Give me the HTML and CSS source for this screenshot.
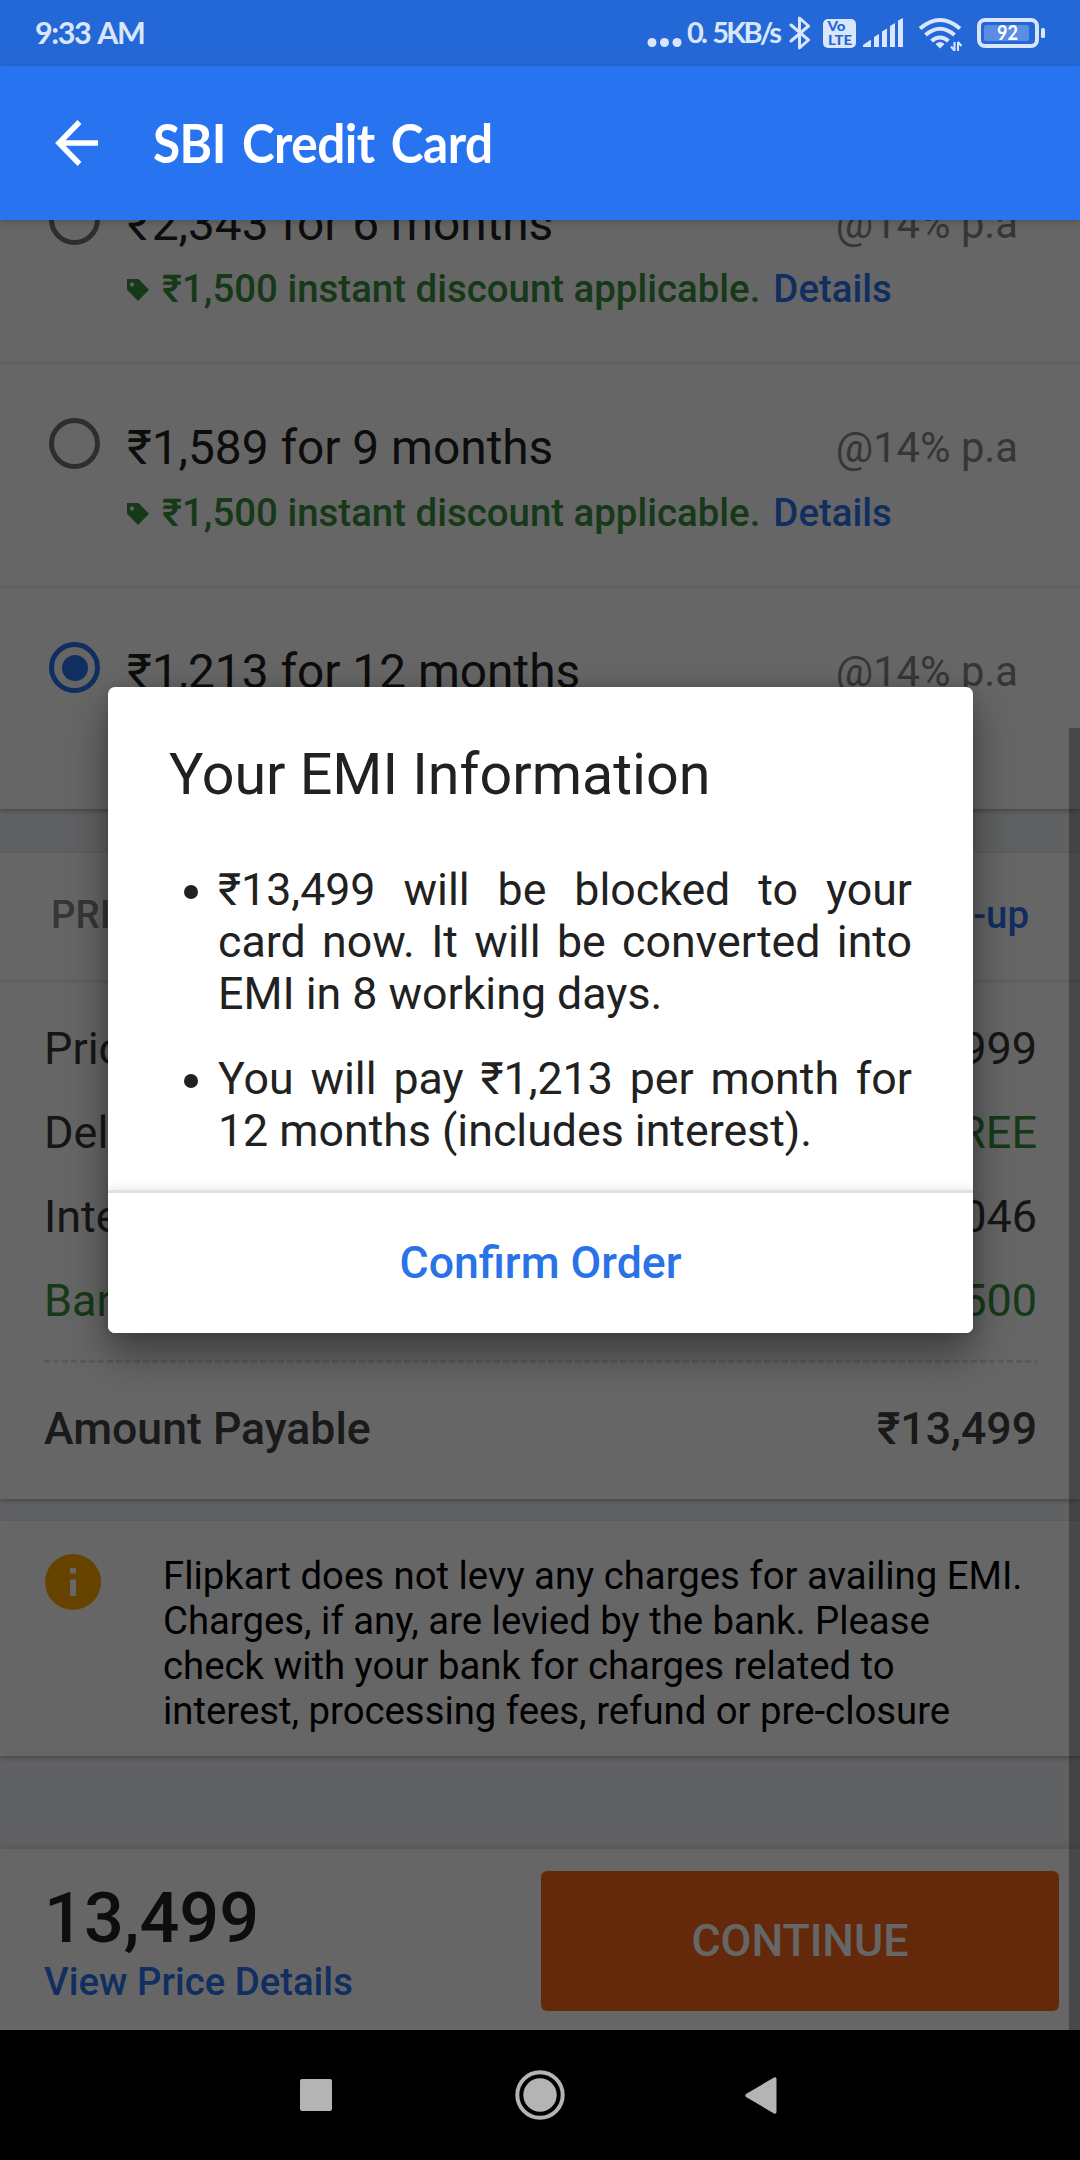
FILE: index.html
```
<!DOCTYPE html>
<html lang="en">
<head>
<meta charset="utf-8">
<title>SBI Credit Card</title>
<link rel="stylesheet" href="styles.css">
</head>
<body>
<div class="screen">
  <header class="status-bar">
    <span class="status-time">9:33 AM</span>
    <div class="status-icons">
      <svg class="dots" width="32" height="66" viewBox="0 0 32 66" fill="currentColor"><circle cx="4" cy="42.500" r="4.500"/><circle cx="16.500" cy="42.500" r="4.500"/><circle cx="29" cy="42.500" r="4.500"/></svg>
      <span class="status-speed">0. 5KB/s</span>
      <svg class="bluetooth" width="22" height="66" viewBox="0 0 22 66" fill="none" stroke="currentColor" stroke-width="3" stroke-linejoin="round" stroke-linecap="round"><path d="M2 25 19.500 40 10.500 48V18L19.500 26 2 41"/></svg>
      <svg class="volte" width="33" height="66" viewBox="0 0 33 66"><rect y="19" width="33" height="29" rx="5" fill="currentColor"/><text x="4.500" y="31" class="volte-text" textLength="18" lengthAdjust="spacingAndGlyphs">Vo</text><text x="5" y="44.500" class="volte-text" textLength="24" lengthAdjust="spacingAndGlyphs">LTE</text></svg>
      <svg class="signal" width="40" height="66" viewBox="0 0 40 66" fill="currentColor"><path d="M0 47v-2l8-5.500V47zM11 47V37l5-3v13zM19 47V31.500l5-3V47zM27 47V26l5-3v24zM35 47V20.500l5-2.500v29z"/></svg>
      <svg class="wifi" width="44" height="66" viewBox="0 0 44 66"><g fill="none" stroke="currentColor" stroke-width="4"><path d="M1 28.500Q21 11.500 41 28.500M6.500 35Q21 22.500 35.500 35M12.500 41Q21 34 29.500 41"/></g><path d="M16.500 44Q21 40 25.500 44L21 48.500z" fill="currentColor"/><path d="M35.500 42v9M39 51v-9M32 46.500l3.500 4M42.500 46 39 42" stroke="currentColor" stroke-width="2"/></svg>
      <svg class="battery" width="68" height="66" viewBox="0 0 68 66"><rect x="2" y="20" width="58" height="26" rx="6" fill="none" stroke="currentColor" stroke-width="4"/><rect x="7" y="25" width="45" height="16" rx="2" fill="#5a8de3"/><rect x="64" y="28" width="4" height="10" rx="1.500" fill="currentColor"/><text x="20" y="40" class="battery-text" textLength="21" lengthAdjust="spacingAndGlyphs">92</text></svg>
    </div>
  </header>

  <div class="app-bar">
    <svg class="back" width="44" height="46" viewBox="0 0 44 46" fill="none" stroke="#fff" stroke-width="5.500"><path d="M43 23H4M24.500 2 4 23l20.500 21"/></svg>
    <h1 class="app-title">SBI Credit Card</h1>
  </div>

  <main class="viewport">
    <section class="card options">
      <div class="option">
        <span class="radio"></span>
        <div class="option-body">
          <div class="option-title">₹2,343 for 6 months</div>
          <div class="offer"><svg class="tag" width="22" height="22" viewBox="0 0 22 22" fill="currentColor"><path fill-rule="evenodd" d="M0 0H11.500L22 10.800 11 22 0 10.800zM5 3.500a2 2 0 1 0 .01 0z"/></svg><span>₹1,500 instant discount applicable.</span><a class="link">Details</a></div>
        </div>
        <span class="rate">@14% p.a</span>
      </div>
      <div class="option">
        <span class="radio"></span>
        <div class="option-body">
          <div class="option-title">₹1,589 for 9 months</div>
          <div class="offer"><svg class="tag" width="22" height="22" viewBox="0 0 22 22" fill="currentColor"><path fill-rule="evenodd" d="M0 0H11.500L22 10.800 11 22 0 10.800zM5 3.500a2 2 0 1 0 .01 0z"/></svg><span>₹1,500 instant discount applicable.</span><a class="link">Details</a></div>
        </div>
        <span class="rate">@14% p.a</span>
      </div>
      <div class="option">
        <span class="radio checked"></span>
        <div class="option-body">
          <div class="option-title">₹1,213 for 12 months</div>
        </div>
        <span class="rate">@14% p.a</span>
      </div>
    </section>

    <section class="card prices">
      <div class="price-head"><span>PRI</span><a class="link">-up</a></div>
      <div class="price-list">
        <div class="price-row"><span>Pric</span><span>999</span></div>
        <div class="price-row"><span>Deli</span><span class="green">FREE</span></div>
        <div class="price-row"><span>Inter</span><span>046</span></div>
        <div class="price-row green"><span>Ban</span><span>500</span></div>
      </div>
      <div class="dashes"></div>
      <div class="payable"><span>Amount Payable</span><span>₹13,499</span></div>
    </section>

    <section class="card note">
      <svg class="info" width="56" height="56" viewBox="0 0 56 56"><circle cx="28" cy="28" r="28" fill="#ffab00"/><path d="M25 14h6v5.500h-6zM25 25.500h6V42h-6z" fill="#fff"/></svg>
      <p class="note-text">Flipkart does not levy any charges for availing EMI.<br>Charges, if any, are levied by the bank. Please<br>check with your bank for charges related to<br>interest, processing fees, refund or pre-closure</p>
    </section>

    <footer class="checkout">
      <div class="total">
        <div class="total-amount">13,499</div>
        <a class="link total-link">View Price Details</a>
      </div>
      <button class="continue">CONTINUE</button>
    </footer>

    <div class="overlay">
      <div class="dialog">
        <h2 class="dialog-title">Your EMI Information</h2>
        <ul class="dialog-list">
          <li>₹13,499 will be blocked to your card&nbsp;now. It will be converted into EMI in 8 working days.</li>
          <li>You will pay ₹1,213 per month for 12&nbsp;months (includes interest).</li>
        </ul>
        <button class="confirm">Confirm Order</button>
      </div>
    </div>
    <div class="scrollbar"></div>
  </main>

  <nav class="nav-bar">
    <svg width="32" height="32" viewBox="0 0 32 32" fill="#b4b4b4"><rect width="32" height="32" rx="2"/></svg>
    <svg width="50" height="50" viewBox="0 0 50 50"><circle cx="25" cy="25" r="22.700" fill="none" stroke="#b4b4b4" stroke-width="4"/><circle cx="25" cy="25" r="16.700" fill="#b4b4b4"/></svg>
    <svg width="32" height="37" viewBox="0 0 32 37" fill="#b4b4b4"><path d="M1 17 29 .500Q31.500-.300 31.500 2V35Q31.500 37.300 29 36.500L1 20Q-.500 18.500 1 17z"/></svg>
  </nav>
</div>
</body>
</html>
```
FILE: styles.css
```
* { box-sizing: border-box; }

body {
  margin: 0;
  font-family: Roboto, "Liberation Sans", sans-serif;
  color: #212121;
  background: #000;
}

h1, h2, p, ul { margin: 0; padding: 0; font-weight: 400; }
button { border: 0; margin: 0; padding: 0; font: inherit; }
svg { display: block; flex: none; }

.screen {
  width: 1080px;
  height: 2160px;
  display: flex;
  flex-direction: column;
  overflow: hidden;
}

/* status bar */
.status-bar {
  height: 66px;
  flex: none;
  display: flex;
  justify-content: space-between;
  padding: 0 35px;
  background: #2468d8;
  color: #d9e6fb;
  font-family: Lato, sans-serif;
}
.status-time {
  font-size: 30.5px;
  font-weight: 700;
  line-height: 65px;
  letter-spacing: -1.4px;
  word-spacing: 2px;
  white-space: nowrap;
}
.status-icons { display: flex; }
.dots { overflow: visible; }
.status-speed {
  width: 94px;
  margin-left: 7px;
  font-size: 29px;
  font-weight: 700;
  line-height: 64px;
  letter-spacing: -2.8px;
  word-spacing: 3px;
  white-space: nowrap;
}
.bluetooth { margin-left: 8px; }
.volte { margin-left: 12px; }
.volte-text { font: 900 13.5px Lato, sans-serif; fill: #2468d8; }
.signal { margin-left: 7px; }
.wifi { margin-left: 16px; }
.battery { margin-left: 14px; }
.battery-text { font: 700 21px Lato, sans-serif; fill: #fff; }

/* app bar */
.app-bar {
  position: relative;
  z-index: 1;
  height: 154px;
  flex: none;
  display: flex;
  align-items: center;
  padding-left: 55px;
  background: #2874f0;
  box-shadow: 0 2px 8px rgba(0, 0, 0, .2);
}
.app-title {
  margin-left: 54px;
  font: 700 53px/60px Lato, sans-serif;
  color: #fff;
  letter-spacing: -.6px;
  word-spacing: 5px;
  white-space: nowrap;
  transform: scaleX(.935);
  transform-origin: left;
}

/* page */
.viewport {
  position: relative;
  height: 1810px;
  flex: none;
  overflow: hidden;
  background: #f1f3f6;
}
.card {
  background: #fff;
  box-shadow: 0 2px 5px rgba(0, 0, 0, .28);
}
.link { color: #2874f0; font-weight: 500; }
.green { color: #388e3c; }

.options { margin-top: -80px; height: 669px; }
.option {
  display: flex;
  height: 224px;
  padding: 54px 62px 0 49px;
  border-bottom: 3px solid #f0f0f0;
}
.option:last-child { height: 221px; border: 0; }
.radio {
  flex: none;
  width: 51px;
  height: 51px;
  border: 5.5px solid #737373;
  border-radius: 50%;
}
.radio.checked {
  display: grid;
  place-items: center;
  border-color: #2874f0;
}
.radio.checked::before {
  content: "";
  width: 26px;
  height: 26px;
  border-radius: 50%;
  background: #2874f0;
}
.option-body { flex: 1; min-width: 0; margin: 2px 0 0 27px; }
.option-title { font-size: 47.8px; line-height: 56px; white-space: nowrap; }
.offer {
  display: flex;
  align-items: center;
  margin-top: 14px;
  font-size: 38.4px;
  line-height: 46px;
  font-weight: 500;
  color: #388e3c;
  white-space: nowrap;
}
.tag { margin: 2px 13px 0 0; }
.offer .link { margin-left: 13px; }
.rate {
  margin-top: 2px;
  font-size: 41.7px;
  line-height: 56px;
  color: #878787;
  white-space: nowrap;
}

.prices { margin-top: 44px; height: 646px; }
.price-head {
  display: flex;
  justify-content: space-between;
  height: 130px;
  padding: 0 51px;
  border-bottom: 3px solid #ededed;
  font-size: 38.4px;
  font-weight: 500;
  line-height: 124px;
  color: #878787;
}
.price-list { padding: 24px 43px 0 44px; }
.price-row {
  display: flex;
  justify-content: space-between;
  font-size: 45px;
  line-height: 84px;
  color: #373737;
}
.price-row.green, .price-row .green { color: #388e3c; }
.dashes {
  height: 3px;
  margin: 17px 43px 0 44px;
  background: repeating-linear-gradient(90deg, #e0e0e0 0 6px, transparent 6px 9px);
}
.payable {
  display: flex;
  justify-content: space-between;
  padding: 0 43px 0 44px;
  font-size: 44.6px;
  font-weight: 500;
  line-height: 132px;
  color: #424242;
}

.note {
  display: flex;
  gap: 62px;
  margin-top: 22px;
  height: 235px;
  padding: 33px 45px 0;
}
.note-text {
  margin-top: -1px;
  font-size: 38.3px;
  line-height: 45px;
  color: #000;
  white-space: nowrap;
}

.checkout {
  display: flex;
  justify-content: space-between;
  margin-top: 93px;
  height: 181px;
  padding: 22px 21px 0 44px;
  background: #fff;
  box-shadow: 0 -1px 10px rgba(0, 0, 0, .16);
}
.total { padding-top: 7px; }
.total-amount { font-size: 70.2px; line-height: 80px; font-weight: 500; }
.total-link { display: block; margin-top: 1px; font-size: 38.3px; line-height: 46px; }
.continue {
  width: 518px;
  height: 140px;
  padding-bottom: 1px;
  border-radius: 6px;
  background: #f7661b;
  color: #fff;
  font-size: 44.7px;
  font-weight: 500;
}

/* dialog */
.overlay {
  position: absolute;
  inset: 0;
  padding: 467px 107px 0 108px;
  background: rgba(0, 0, 0, .6);
}
.dialog {
  height: 646px;
  display: flex;
  flex-direction: column;
  padding-top: 54px;
  border-radius: 7px;
  background: #fff;
  box-shadow: 0 20px 42px rgba(0, 0, 0, .42), 0 0 12px rgba(0, 0, 0, .12);
}
.dialog-title { padding-left: 61px; font-size: 57.4px; line-height: 68px; }
.dialog-list {
  flex: 1;
  padding: 55px 61px 0 110px;
  list-style: none;
  font-size: 44.7px;
  line-height: 52px;
  text-align: justify;
}
.dialog-list li { position: relative; margin-bottom: 33px; }
.dialog-list li::before {
  content: "";
  position: absolute;
  left: -34px;
  top: 21px;
  width: 14px;
  height: 14px;
  border-radius: 50%;
  background: #212121;
}
.confirm {
  height: 143px;
  border-top: 3px solid #e0e0e0;
  border-radius: 0 0 7px 7px;
  background: #fff;
  box-shadow: 0 -3px 8px rgba(0, 0, 0, .07);
  color: #2a72e8;
  font-size: 44.6px;
  font-weight: 500;
}

.scrollbar {
  position: absolute;
  top: 508px;
  right: 0;
  bottom: 0;
  width: 11px;
  background: rgba(0, 0, 0, .29);
}

/* system navigation */
.nav-bar {
  flex: 1;
  display: flex;
  align-items: center;
  padding-left: 300px;
  background: #000;
}
.nav-bar svg:nth-child(2) { margin-left: 183px; }
.nav-bar svg:nth-child(3) { margin-left: 180px; }
```
